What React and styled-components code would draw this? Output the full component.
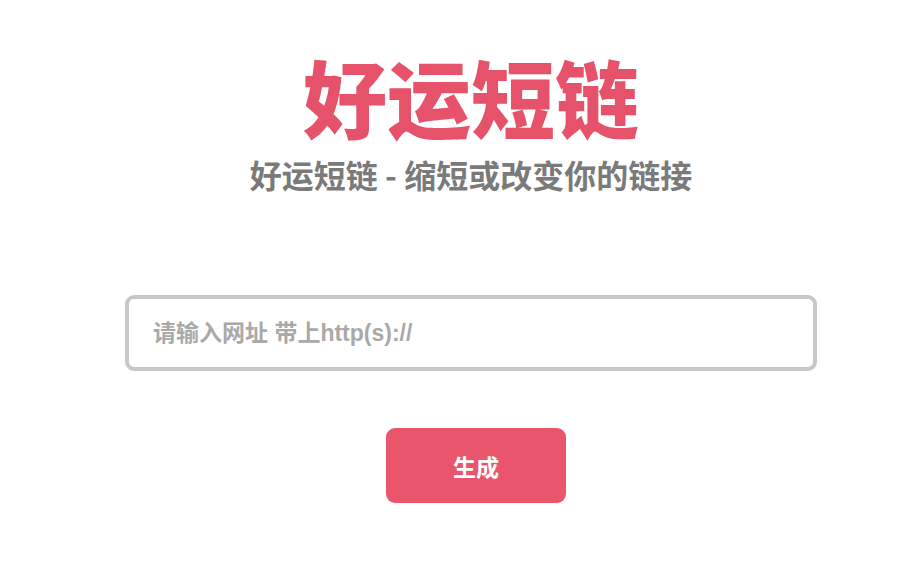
import React from "react";
import styled, { createGlobalStyle } from "styled-components";

const GlobalStyle = createGlobalStyle`
  body {
    margin: 0;
    background: #ffffff;
    font-family: "Liberation Sans", "Noto Sans CJK SC", sans-serif;
  }
`;

const StyledPage = styled.div`
  display: flex;
  flex-direction: column;
  align-items: center;
  padding: 44px 0 0 22px;
`;

const StyledTitle = styled.h1`
  margin: 0;
  font-family: "Noto Sans CJK SC", sans-serif;
  font-size: 84px;
  font-weight: 900;
  line-height: 104px;
  color: #e5526a;
`;

const StyledSubtitle = styled.h2`
  margin: 5px 0 0;
  font-family: "Noto Sans CJK SC", sans-serif;
  font-size: 32px;
  font-weight: 700;
  line-height: 42px;
  color: #7a7a7a;
`;

const StyledInput = styled.input`
  box-sizing: border-box;
  width: 692px;
  height: 76px;
  margin-top: 100px;
  padding: 0 24px;
  border: 4px solid #c4c8c9;
  border-radius: 9px;
  outline: none;
  font-family: "Liberation Sans", "Noto Sans CJK SC", sans-serif;
  font-size: 23px;
  font-weight: 700;
  color: #333;

  &::placeholder {
    color: #a9a9a9;
  }
`;

const StyledButton = styled.button`
  width: 180px;
  height: 75px;
  margin: 57px 0 0 10px;
  border: none;
  border-radius: 9px;
  background-color: #e9566c;
  color: #ffffff;
  font-family: "Noto Sans CJK SC", sans-serif;
  font-size: 23px;
  font-weight: 700;
  cursor: pointer;
`;

function App() {
  return (
    <StyledPage>
      <GlobalStyle />
      <StyledTitle>好运短链</StyledTitle>
      <StyledSubtitle>好运短链 - 缩短或改变你的链接</StyledSubtitle>
      <StyledInput type="text" placeholder="请输入网址 带上http(s)://" />
      <StyledButton type="button">生成</StyledButton>
    </StyledPage>
  );
}

export default App;
